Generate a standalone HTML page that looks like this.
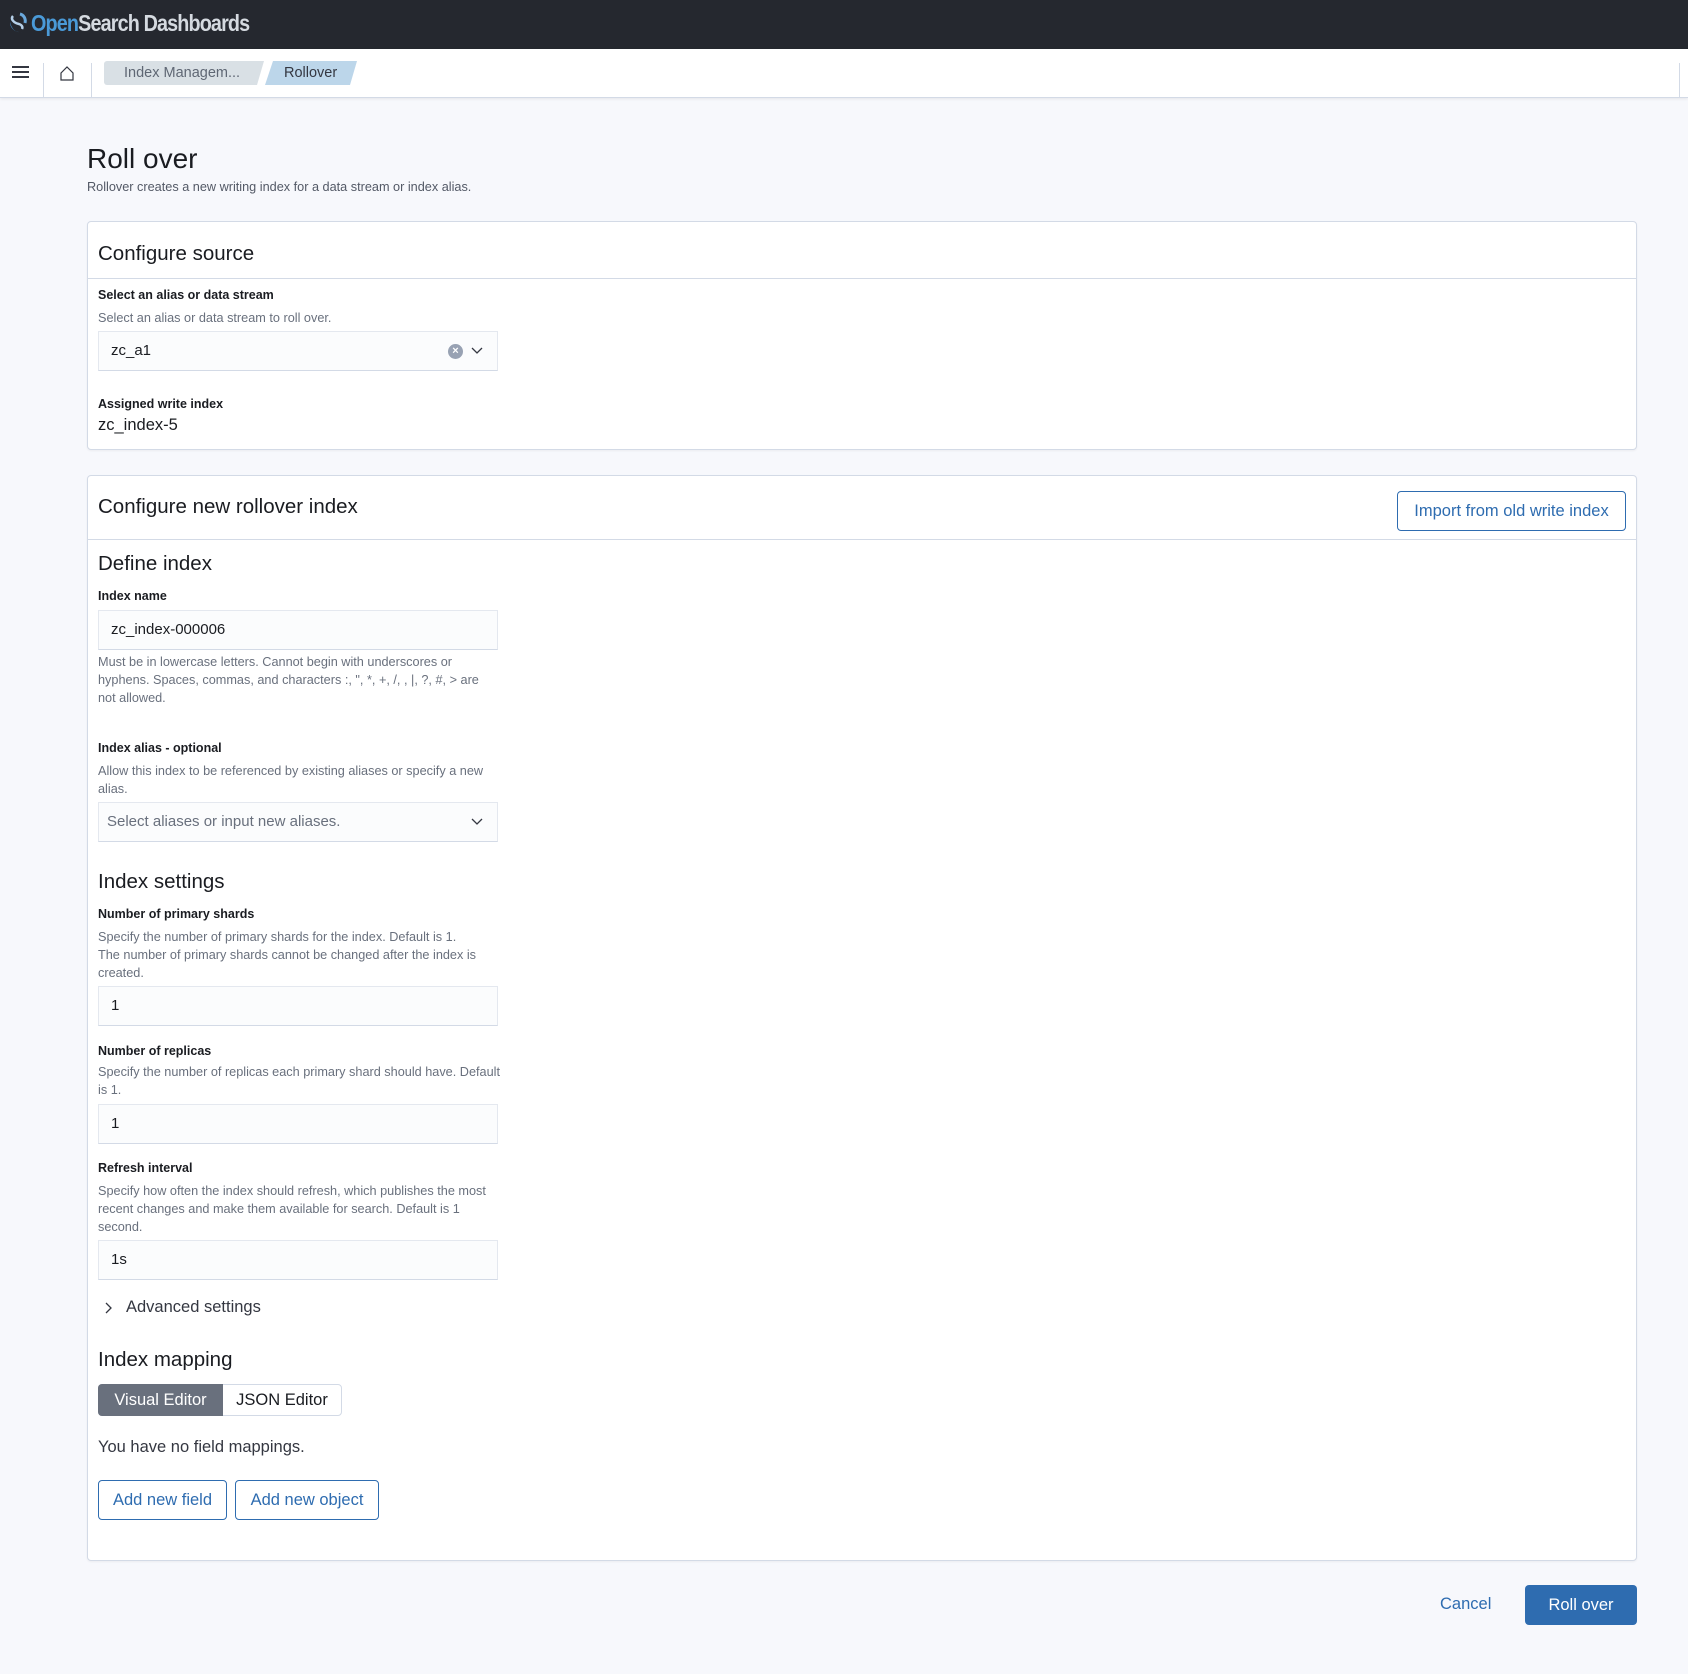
<!DOCTYPE html>
<html><head><meta charset="utf-8"><style>
*{box-sizing:border-box;margin:0;padding:0}
body{width:1688px;height:1674px;background:#f7f8fc;font-family:"Liberation Sans",sans-serif;color:#1a1c21;position:relative;overflow:hidden}
.a{position:absolute;white-space:nowrap}
.top{left:0;top:0;width:1688px;height:49px;background:#25282f}
.nav{left:0;top:49px;width:1688px;height:49px;background:#fff;border-bottom:1px solid #d3dae6;box-shadow:0 1px 3px rgba(0,0,0,.08)}
.card{background:#fff;border:1px solid #d3dae6;border-radius:4px;box-shadow:0 1px 2px rgba(0,0,0,.05)}
.h2{font-size:20.5px;line-height:26px}
.lbl{font-size:12.5px;font-weight:bold;line-height:18px}
.help{font-size:12.7px;color:#69707d;line-height:18px}
.inp{left:98px;width:400px;height:40px;background:#fbfcfd;border:1px solid #e4e8ef;border-bottom:1px solid #d3dae6;font-size:15px;line-height:38px;padding-left:12px}
.btn{border:1px solid #2e6cb0;border-radius:4px;color:#2e6cb0;font-size:16.5px;text-align:center;background:#fff}
</style></head><body>
<div class="a top"></div>
<svg class="a" style="left:7px;top:12px" width="22" height="24" viewBox="0 0 22 24"><path d="M13 2c4 1 6 5 5 9" stroke="#6aa8dc" stroke-width="3" fill="none"/><path d="M3 10c0 6 5 11 12 10c-6 1-10-2-12-10z" fill="#4b94d6"/><path d="M6 4c-3 3 1 7 6 8c3 1 4 3 3 5" stroke="#b5cfe8" stroke-width="2.5" fill="none"/></svg>
<div class="a" style="left:31px;top:9px;font-size:23px;font-weight:bold;letter-spacing:-1px;line-height:28px;transform:scaleX(.86);transform-origin:left"><span style="color:#4a9ad8">Open</span><span style="color:#d5dae0">Search Dashboards</span></div>
<div class="a nav"></div>
<div class="a" style="left:12px;top:66px;width:17px;height:2px;background:#343741;box-shadow:0 5px 0 #343741,0 10px 0 #343741"></div>
<div class="a" style="left:43px;top:63px;width:1px;height:34px;background:#d3dae6"></div>
<div class="a" style="left:91px;top:63px;width:1px;height:34px;background:#d3dae6"></div>
<svg class="a" style="left:59px;top:65px" width="16" height="16" viewBox="0 0 16 16"><path d="M2 8L8 2l6 6v7H2z" fill="none" stroke="#343741" stroke-width="1.2"/></svg>
<svg class="a" style="left:104px;top:61px" width="160" height="24"><path d="M3 0H160L153 24H3a3 3 0 0 1-3-3V3a3 3 0 0 1 3-3z" fill="#d9e0e5"/></svg>
<div class="a" style="left:124px;top:62px;font-size:14.5px;line-height:22px;color:#5f6774">Index Managem...</div>
<svg class="a" style="left:265px;top:61px" width="92" height="24"><path d="M8 0H92L85 24H0z" fill="#bcd6ea"/></svg>
<div class="a" style="left:284px;top:62px;font-size:14.5px;line-height:22px;color:#343741">Rollover</div>
<div class="a" style="left:1679px;top:63px;width:1px;height:34px;background:#d3dae6"></div>

<div class="a" style="left:87px;top:141px;font-size:28px;line-height:36px">Roll over</div>
<div class="a" style="left:87px;top:178px;font-size:12.7px;line-height:18px;color:#535966">Rollover creates a new writing index for a data stream or index alias.</div>

<div class="a card" style="left:87px;top:221px;width:1550px;height:229px"></div>
<div class="a h2" style="left:98px;top:241px">Configure source</div>
<div class="a" style="left:88px;top:278px;width:1548px;height:1px;background:#d3dae6"></div>
<div class="a lbl" style="left:98px;top:286px">Select an alias or data stream</div>
<div class="a help" style="left:98px;top:309px">Select an alias or data stream to roll over.</div>
<div class="a inp" style="top:331px">zc_a1</div>
<div class="a" style="left:448px;top:344px;width:15px;height:15px;border-radius:50%;background:#98a2b3;color:#fff;font-size:11px;line-height:15px;text-align:center;font-weight:bold">×</div>
<svg class="a" style="left:470px;top:344px" width="14" height="14"><path d="M2 4l5 5 5-5" fill="none" stroke="#343741" stroke-width="1.3"/></svg>
<div class="a lbl" style="left:98px;top:395px">Assigned write index</div>
<div class="a" style="left:98px;top:415px;font-size:16.5px;line-height:20px">zc_index-5</div>

<div class="a card" style="left:87px;top:475px;width:1550px;height:1086px"></div>
<div class="a h2" style="left:98px;top:494px">Configure new rollover index</div>
<div class="a btn" style="left:1397px;top:491px;width:229px;height:40px;line-height:38px">Import from old write index</div>
<div class="a" style="left:88px;top:539px;width:1548px;height:1px;background:#d3dae6"></div>
<div class="a h2" style="left:98px;top:551px">Define index</div>
<div class="a lbl" style="left:98px;top:587px">Index name</div>
<div class="a inp" style="top:610px">zc_index-000006</div>
<div class="a help" style="left:98px;top:653px;white-space:normal;width:395px">Must be in lowercase letters. Cannot begin with underscores or hyphens. Spaces, commas, and characters :, ", *, +, /, , |, ?, #, &gt; are not allowed.</div>
<div class="a lbl" style="left:98px;top:739px">Index alias - optional</div>
<div class="a help" style="left:98px;top:762px;white-space:normal;width:405px">Allow this index to be referenced by existing aliases or specify a new alias.</div>
<div class="a inp" style="top:802px;padding-left:8px;color:#69707d">Select aliases or input new aliases.</div>
<svg class="a" style="left:470px;top:815px" width="14" height="14"><path d="M2 4l5 5 5-5" fill="none" stroke="#343741" stroke-width="1.3"/></svg>
<div class="a h2" style="left:98px;top:869px">Index settings</div>
<div class="a lbl" style="left:98px;top:905px">Number of primary shards</div>
<div class="a help" style="left:98px;top:928px;white-space:normal;width:400px">Specify the number of primary shards for the index. Default is 1.<br>The number of primary shards cannot be changed after the index is created.</div>
<div class="a inp" style="top:986px">1</div>
<div class="a lbl" style="left:98px;top:1042px">Number of replicas</div>
<div class="a help" style="left:98px;top:1063px;white-space:normal;width:405px">Specify the number of replicas each primary shard should have. Default is 1.</div>
<div class="a inp" style="top:1104px">1</div>
<div class="a lbl" style="left:98px;top:1159px">Refresh interval</div>
<div class="a help" style="left:98px;top:1182px;white-space:normal;width:400px">Specify how often the index should refresh, which publishes the most recent changes and make them available for search. Default is 1 second.</div>
<div class="a inp" style="top:1240px">1s</div>
<svg class="a" style="left:103px;top:1301px" width="12" height="14"><path d="M3 2l5 5-5 5" fill="none" stroke="#343741" stroke-width="1.3"/></svg>
<div class="a" style="left:126px;top:1297px;font-size:16.5px;line-height:20px;color:#343741">Advanced settings</div>
<div class="a h2" style="left:98px;top:1347px">Index mapping</div>
<div class="a" style="left:98px;top:1384px;width:244px;height:32px;border:1px solid #d3dae6;border-radius:4px;background:#fff"></div>
<div class="a" style="left:98px;top:1384px;width:125px;height:32px;background:#69707d;border-radius:4px 0 0 4px;color:#fff;font-size:16.5px;line-height:32px;text-align:center">Visual Editor</div>
<div class="a" style="left:223px;top:1384px;width:118px;height:32px;font-size:16.5px;line-height:32px;text-align:center">JSON Editor</div>
<div class="a" style="left:98px;top:1437px;font-size:16.5px;line-height:20px;color:#343741">You have no field mappings.</div>
<div class="a btn" style="left:98px;top:1480px;width:129px;height:40px;line-height:38px">Add new field</div>
<div class="a btn" style="left:235px;top:1480px;width:144px;height:40px;line-height:38px">Add new object</div>

<div class="a" style="left:1440px;top:1594px;font-size:16.5px;line-height:20px;color:#2e6cb0">Cancel</div>
<div class="a" style="left:1525px;top:1585px;width:112px;height:40px;background:#2e6cb0;border-radius:4px;color:#fff;font-size:16.5px;line-height:40px;text-align:center">Roll over</div>
</body></html>
